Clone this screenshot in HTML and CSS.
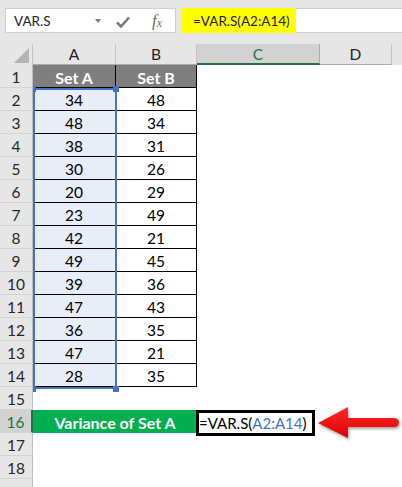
FILE: index.html
```html
<!DOCTYPE html>
<html>
<head>
<meta charset="utf-8">
<link rel="stylesheet" href="styles.css">
</head>
<body>
<div class="app">
  <div class="fbar">
    <div class="namebox">
      <span class="nb-name">VAR.S</span>
      <span class="nb-drop"></span>
      <svg class="nb-check" width="14" height="12" viewBox="0 0 14 12"><path d="M1 6.5 L5 10.5 L13 1.5" fill="none" stroke="#7a7a7a" stroke-width="2.6"/></svg>
      <span class="nb-fx">f<sub>x</sub></span>
    </div>
    <div class="finput"><span class="fhl">=VAR.S(A2:A14)</span></div>
  </div>

  <div class="sheet">
    <div class="row hdr">
      <div class="corner"><span class="tri"></span></div>
      <div class="ch">A</div>
      <div class="ch">B</div>
      <div class="ch sel">C</div>
      <div class="ch">D</div>
      <div class="ch end"></div>
    </div>

    <div class="row">
      <div class="rh">1</div>
      <div class="c tb th">Set A</div>
      <div class="c tb th">Set B</div>
      <div class="c"></div><div class="c"></div><div class="c"></div>
    </div>
    <div class="row"><div class="rh">2</div><div class="c tb sa">34</div><div class="c tb">48</div><div class="c"></div><div class="c"></div><div class="c"></div></div>
    <div class="row"><div class="rh">3</div><div class="c tb sa">48</div><div class="c tb">34</div><div class="c"></div><div class="c"></div><div class="c"></div></div>
    <div class="row"><div class="rh">4</div><div class="c tb sa">38</div><div class="c tb">31</div><div class="c"></div><div class="c"></div><div class="c"></div></div>
    <div class="row"><div class="rh">5</div><div class="c tb sa">30</div><div class="c tb">26</div><div class="c"></div><div class="c"></div><div class="c"></div></div>
    <div class="row"><div class="rh">6</div><div class="c tb sa">20</div><div class="c tb">29</div><div class="c"></div><div class="c"></div><div class="c"></div></div>
    <div class="row"><div class="rh">7</div><div class="c tb sa">23</div><div class="c tb">49</div><div class="c"></div><div class="c"></div><div class="c"></div></div>
    <div class="row"><div class="rh">8</div><div class="c tb sa">42</div><div class="c tb">21</div><div class="c"></div><div class="c"></div><div class="c"></div></div>
    <div class="row"><div class="rh">9</div><div class="c tb sa">49</div><div class="c tb">45</div><div class="c"></div><div class="c"></div><div class="c"></div></div>
    <div class="row"><div class="rh">10</div><div class="c tb sa">39</div><div class="c tb">36</div><div class="c"></div><div class="c"></div><div class="c"></div></div>
    <div class="row"><div class="rh">11</div><div class="c tb sa">47</div><div class="c tb">43</div><div class="c"></div><div class="c"></div><div class="c"></div></div>
    <div class="row"><div class="rh">12</div><div class="c tb sa">36</div><div class="c tb">35</div><div class="c"></div><div class="c"></div><div class="c"></div></div>
    <div class="row"><div class="rh">13</div><div class="c tb sa">47</div><div class="c tb">21</div><div class="c"></div><div class="c"></div><div class="c"></div></div>
    <div class="row"><div class="rh">14</div><div class="c tb sa">28</div><div class="c tb">35</div><div class="c"></div><div class="c"></div><div class="c"></div></div>
    <div class="row"><div class="rh">15</div><div class="c"></div><div class="c"></div><div class="c"></div><div class="c"></div><div class="c"></div></div>
    <div class="row"><div class="rh rsel">16</div><div class="c merged">Variance of Set A</div><div class="c"></div><div class="c"></div><div class="c"></div></div>
    <div class="row"><div class="rh">17</div><div class="c"></div><div class="c"></div><div class="c"></div><div class="c"></div><div class="c"></div></div>
    <div class="row"><div class="rh">18</div><div class="c"></div><div class="c"></div><div class="c"></div><div class="c"></div><div class="c"></div></div>
    <div class="row"><div class="rh"></div><div class="c"></div><div class="c"></div><div class="c"></div><div class="c"></div><div class="c"></div></div>

    <div class="selbox"></div>
    <span class="hdl h-tl"></span>
    <span class="hdl h-tr"></span>
    <span class="hdl h-bl"></span>
    <span class="hdl h-br"></span>

    <div class="editor">=VAR.S(<span class="ref">A2:A14</span>)</div>

    <svg class="arrow" width="86" height="44" viewBox="0 0 86 44">
      <defs>
        <linearGradient id="rg" x1="0" y1="0" x2="0" y2="1">
          <stop offset="0" stop-color="#ff2a2a"/>
          <stop offset="1" stop-color="#e00000"/>
        </linearGradient>
      </defs>
      <path d="M2 20 L32 4 L32 15 L78.5 15 A4.5 4.5 0 0 1 78.5 24 L32 24 L32 35 Z" fill="url(#rg)"/>
    </svg>
  </div>
</div>
</body>
</html>
```

FILE: styles.css
```css
html, body {
  margin: 0;
  padding: 0;
}
body {
  width: 402px;
  height: 487px;
  overflow: hidden;
  background: #ffffff;
  font-family: Lato, "Liberation Sans", sans-serif;
  color: #000;
}
.app {
  width: 402px;
}

/* formula bar */
.fbar {
  height: 44px;
  background: #e6e6e6;
  display: flex;
  align-items: flex-start;
  padding-top: 8px;
  box-sizing: border-box;
}
.namebox {
  margin-left: 5px;
  width: 171px;
  height: 25px;
  background: #fff;
  border: 1px solid #d0d0d0;
  box-sizing: border-box;
  display: flex;
  align-items: center;
  padding-left: 8px;
}
.nb-name {
  font-size: 13.5px;
  color: #222;
  width: 37px;
}
.nb-drop {
  margin-left: 44px;
  width: 0;
  height: 0;
  border-left: 3.5px solid transparent;
  border-right: 3.5px solid transparent;
  border-top: 4px solid #7a7a7a;
}
.nb-check {
  margin-left: 15px;
  margin-top: 2px;
}
.nb-fx {
  margin-left: 22px;
  font-family: "Liberation Serif", serif;
  font-style: italic;
  font-size: 17px;
  color: #6e6e6e;
  line-height: 1;
}
.nb-fx sub {
  font-size: 12px;
  vertical-align: -1px;
}
.finput {
  margin-left: 5px;
  flex: 1;
  height: 25px;
  background: #fff;
  border-top: 1px solid #d0d0d0;
  border-bottom: 1px solid #d0d0d0;
  box-sizing: border-box;
  display: flex;
}
.fhl {
  background: #ffff00;
  width: 115px;
  box-sizing: border-box;
  padding-left: 12px;
  font-size: 13.5px;
  color: #222;
  display: flex;
  align-items: center;
  margin-top: -1px;
  margin-bottom: -1px;
}

/* sheet */
.sheet {
  position: relative;
}
.row {
  display: grid;
  grid-template-columns: 33px 83px 81px 123px 72px 1fr;
  height: 23px;
}
.row.hdr {
  height: 21px;
  background: #e6e6e6;
}
.corner {
  position: relative;
  border-right: 1px solid #c4c4c4;
  box-sizing: border-box;
}
.tri {
  position: absolute;
  right: 3px;
  bottom: 2px;
  width: 0;
  height: 0;
  border-left: 15px solid transparent;
  border-bottom: 15px solid #b4b4b4;
}
.ch {
  display: flex;
  align-items: center;
  justify-content: center;
  font-size: 15.5px;
  color: #222;
  border-right: 1px solid #c4c4c4;
  border-bottom: 1px solid #ababab;
  box-sizing: border-box;
}
.ch.sel {
  background: #d2d2d2;
  color: #217346;
  border-bottom: 2px solid #217346;
  border-right: 1px solid #ababab;
}
.ch.end {
  border: none;
}
.rh {
  background: #e6e6e6;
  border-right: 1px solid #bdbdbd;
  border-bottom: 1px solid #d4d4d4;
  box-sizing: border-box;
  display: flex;
  align-items: center;
  justify-content: center;
  font-size: 15.5px;
  color: #262626;
  padding-top: 1px;
}
.rh.rsel {
  background: #d2d2d2;
  color: #217346;
  border-right: 2px solid #217346;
}
.c {
  box-sizing: border-box;
  display: flex;
  align-items: center;
  justify-content: center;
  font-size: 15.5px;
  padding-top: 2px;
}
.c.tb {
  border-right: 1px solid #000;
  border-bottom: 1px solid #000;
}
.c.th {
  background: #7f7f7f;
  color: #fff;
  font-weight: bold;
  font-size: 16px;
}
.c.sa {
  background: #e8eef8;
}
.c.merged {
  grid-column: span 2;
  background: #00b050;
  color: #fff;
  font-weight: bold;
  font-size: 16px;
}

/* overlays */
.selbox {
  position: absolute;
  left: 33px;
  top: 44px;
  width: 84px;
  height: 301px;
  border: 2px solid #4472c4;
  box-sizing: border-box;
}
.hdl {
  position: absolute;
  width: 6px;
  height: 6px;
  background: #4472c4;
}
.h-tl { left: 33px; top: 42px; width: 3px; }
.h-tr { left: 113px; top: 42px; }
.h-bl { left: 33px; top: 342px; width: 3px; }
.h-br { left: 113px; top: 342px; }

.editor {
  position: absolute;
  left: 196px;
  top: 366px;
  width: 119px;
  height: 26px;
  border: 3px solid #000;
  box-sizing: border-box;
  background: #fff;
  font-size: 15px;
  line-height: 20px;
  padding-left: 0;
  white-space: nowrap;
  color: #000;
}
.editor .ref {
  color: #4472c4;
}
.arrow {
  position: absolute;
  left: 316px;
  top: 359px;
  filter: drop-shadow(1px 2px 1.5px rgba(0,0,0,0.35));
}
```
